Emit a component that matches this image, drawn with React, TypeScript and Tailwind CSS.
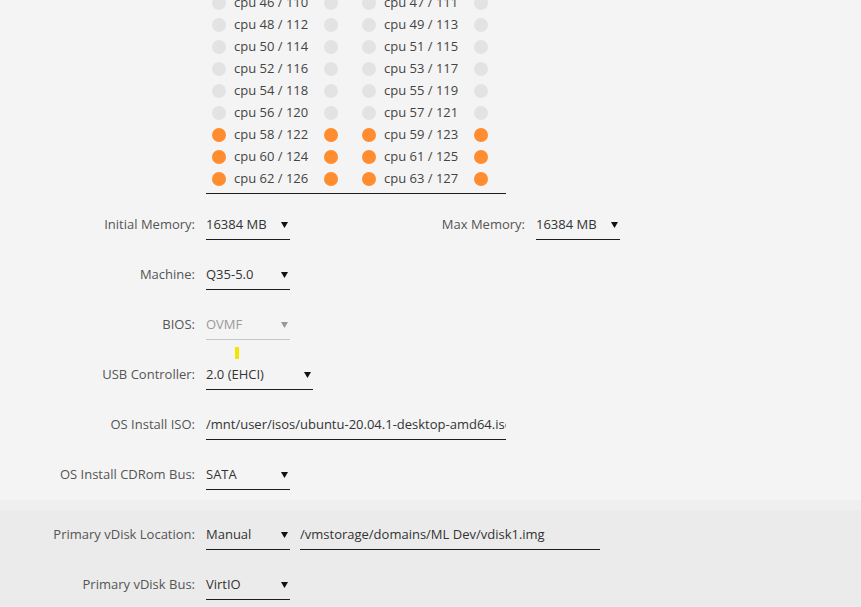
const font = { fontFamily: '"Open Sans", "Noto Sans", sans-serif' };

const cpuRows: [number, number, number, number, boolean][] = [
  [46, 110, 47, 111, false],
  [48, 112, 49, 113, false],
  [50, 114, 51, 115, false],
  [52, 116, 53, 117, false],
  [54, 118, 55, 119, false],
  [56, 120, 57, 121, false],
  [58, 122, 59, 123, true],
  [60, 124, 61, 125, true],
  [62, 126, 63, 127, true],
];

function Dot({ on }: { on: boolean }) {
  return <span className={`block w-[14px] h-[14px] rounded-full shrink-0 ${on ? "bg-[#ff8c2f]" : "bg-[#e3e3e3]"}`} />;
}

function CpuCell({ a, b, on }: { a: number; b: number; on: boolean }) {
  return (
    <div className="w-[150px] h-[22px] flex items-center pl-[6px]">
      <Dot on={on} />
      <span className="w-[98px] pl-[8px] text-[#444] whitespace-nowrap">
        cpu {a} / {b}
      </span>
      <Dot on={on} />
    </div>
  );
}

function Arrow({ muted }: { muted?: boolean }) {
  return (
    <svg width="7" height="7" viewBox="0 0 7 7" className="shrink-0">
      <path d="M0 1 L7 1 L3.5 7 Z" fill={muted ? "#999" : "#111"} />
    </svg>
  );
}

function Select({ value, w = "w-[84px]", muted }: { value: string; w?: string; muted?: boolean }) {
  return (
    <div
      className={`${w} h-[29px] flex items-center justify-between pr-[2px] border-b ${
        muted ? "border-[#c8c8c8] text-[#999]" : "border-[#1c1c1c] text-[#333]"
      }`}
    >
      <span className="whitespace-nowrap">{value}</span>
      <Arrow muted={muted} />
    </div>
  );
}

function Input({ value, w }: { value: string; w: string }) {
  return (
    <div className={`${w} h-[29px] flex items-center border-b border-[#1c1c1c] text-[#333] overflow-hidden whitespace-nowrap`}>
      {value}
    </div>
  );
}

function Label({ text, w = "w-[206px]" }: { text: string; w?: string }) {
  return <div className={`${w} text-right text-[#555] pr-[11px] whitespace-nowrap`}>{text}</div>;
}

function Row({ children }: { children: React.ReactNode }) {
  return <div className="h-[50px] flex items-center">{children}</div>;
}

export default function App() {
  return (
    <div className="w-[861px] h-[607px] overflow-hidden bg-[#f4f4f4] text-[13px]" style={font}>
      <div className="pl-[206px] mt-[-8px]">
        <div className="w-[300px] grid grid-cols-2 pb-[3px] border-b border-[#1c1c1c]">
          {cpuRows.map(([a, b, c, d, on]) => (
            <div key={a} className="contents">
              <CpuCell a={a} b={b} on={on} />
              <CpuCell a={c} b={d} on={on} />
            </div>
          ))}
        </div>
      </div>

      <div className="mt-[6px]">
        <Row>
          <Label text="Initial Memory:" />
          <Select value="16384 MB" />
          <Label text="Max Memory:" w="w-[246px]" />
          <Select value="16384 MB" />
        </Row>
        <Row>
          <Label text="Machine:" />
          <Select value="Q35-5.0" />
        </Row>
        <Row>
          <Label text="BIOS:" />
          <Select value="OVMF" muted />
        </Row>
        <div className="relative">
          <span className="absolute left-[235px] top-[-3px] w-[4px] h-[12px] bg-[#f5e400]" />
          <Row>
            <Label text="USB Controller:" />
            <Select value="2.0 (EHCI)" w="w-[107px]" />
          </Row>
        </div>
        <Row>
          <Label text="OS Install ISO:" />
          <Input value="/mnt/user/isos/ubuntu-20.04.1-desktop-amd64.iso" w="w-[300px]" />
        </Row>
        <Row>
          <Label text="OS Install CDRom Bus:" />
          <Select value="SATA" />
        </Row>
      </div>

      <div className="h-[10px] bg-[#efefef]" />
      <div className="bg-[#ebebeb]">
        <Row>
          <Label text="Primary vDisk Location:" />
          <Select value="Manual" />
          <div className="w-[10px]" />
          <Input value="/vmstorage/domains/ML Dev/vdisk1.img" w="w-[300px]" />
        </Row>
        <Row>
          <Label text="Primary vDisk Bus:" />
          <Select value="VirtIO" />
        </Row>
      </div>
    </div>
  );
}
